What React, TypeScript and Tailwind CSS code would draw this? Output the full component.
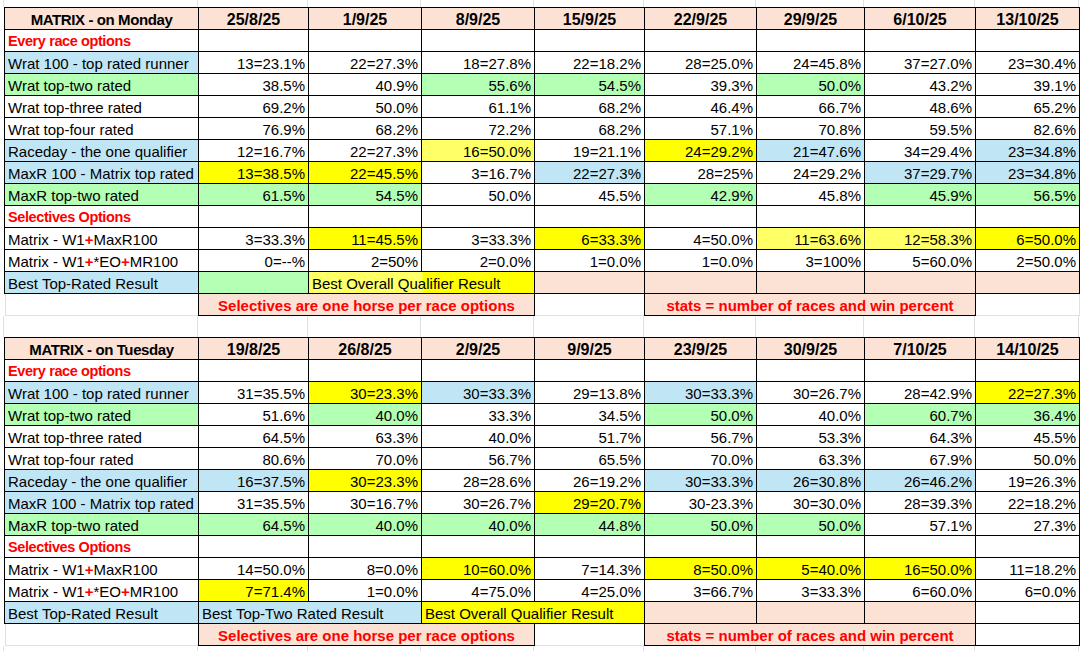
import React from "react";

const W = [194, 110, 113, 113, 110, 112, 108, 111, 104];

const BG: Record<string, string> = {
  w: "bg-white",
  b: "bg-[#c0e6f5]",
  g: "bg-[#b3ffb3]",
  y: "bg-[#ffff00]",
  l: "bg-[#ffff66]",
  p: "bg-[#fbe2d5]",
};

type Row = { label: string; lbg?: string; red?: boolean; vals?: string[]; c?: string };

const monday: Row[] = [
  { label: "Every race options", red: true },
  { label: "Wrat 100 - top rated runner", lbg: "b", vals: ["13=23.1%", "22=27.3%", "18=27.8%", "22=18.2%", "28=25.0%", "24=45.8%", "37=27.0%", "23=30.4%"] },
  { label: "Wrat top-two rated", lbg: "g", vals: ["38.5%", "40.9%", "55.6%", "54.5%", "39.3%", "50.0%", "43.2%", "39.1%"], c: "wwggwgww" },
  { label: "Wrat top-three rated", vals: ["69.2%", "50.0%", "61.1%", "68.2%", "46.4%", "66.7%", "48.6%", "65.2%"] },
  { label: "Wrat top-four rated", vals: ["76.9%", "68.2%", "72.2%", "68.2%", "57.1%", "70.8%", "59.5%", "82.6%"] },
  { label: "Raceday - the one qualifier", lbg: "b", vals: ["12=16.7%", "22=27.3%", "16=50.0%", "19=21.1%", "24=29.2%", "21=47.6%", "34=29.4%", "23=34.8%"], c: "wwlwybwb" },
  { label: "MaxR 100 - Matrix top rated", lbg: "b", vals: ["13=38.5%", "22=45.5%", "3=16.7%", "22=27.3%", "28=25%", "24=29.2%", "37=29.7%", "23=34.8%"], c: "yywbwwbb" },
  { label: "MaxR top-two rated", lbg: "g", vals: ["61.5%", "54.5%", "50.0%", "45.5%", "42.9%", "45.8%", "45.9%", "56.5%"], c: "ggwwgwgg" },
  { label: "Selectives Options", red: true },
  { label: "Matrix - W1+MaxR100", vals: ["3=33.3%", "11=45.5%", "3=33.3%", "6=33.3%", "4=50.0%", "11=63.6%", "12=58.3%", "6=50.0%"], c: "wywywlly" },
  { label: "Matrix - W1+*EO+MR100", vals: ["0=--%", "2=50%", "2=0.0%", "1=0.0%", "1=0.0%", "3=100%", "5=60.0%", "2=50.0%"] },
];

const tuesday: Row[] = [
  { label: "Every race options", red: true },
  { label: "Wrat 100 - top rated runner", lbg: "b", vals: ["31=35.5%", "30=23.3%", "30=33.3%", "29=13.8%", "30=33.3%", "30=26.7%", "28=42.9%", "22=27.3%"], c: "wybwbwwy" },
  { label: "Wrat top-two rated", lbg: "g", vals: ["51.6%", "40.0%", "33.3%", "34.5%", "50.0%", "40.0%", "60.7%", "36.4%"], c: "wgwwgwgg" },
  { label: "Wrat top-three rated", vals: ["64.5%", "63.3%", "40.0%", "51.7%", "56.7%", "53.3%", "64.3%", "45.5%"] },
  { label: "Wrat top-four rated", vals: ["80.6%", "70.0%", "56.7%", "65.5%", "70.0%", "63.3%", "67.9%", "50.0%"] },
  { label: "Raceday - the one qualifier", lbg: "b", vals: ["16=37.5%", "30=23.3%", "28=28.6%", "26=19.2%", "30=33.3%", "26=30.8%", "26=46.2%", "19=26.3%"], c: "bywwbbbw" },
  { label: "MaxR 100 - Matrix top rated", lbg: "b", vals: ["31=35.5%", "30=16.7%", "30=26.7%", "29=20.7%", "30-23.3%", "30=30.0%", "28=39.3%", "22=18.2%"], c: "wwwywwww" },
  { label: "MaxR top-two rated", lbg: "g", vals: ["64.5%", "40.0%", "40.0%", "44.8%", "50.0%", "50.0%", "57.1%", "27.3%"], c: "ggggggww" },
  { label: "Selectives Options", red: true },
  { label: "Matrix - W1+MaxR100", vals: ["14=50.0%", "8=0.0%", "10=60.0%", "7=14.3%", "8=50.0%", "5=40.0%", "16=50.0%", "11=18.2%"], c: "wwywyyyw" },
  { label: "Matrix - W1+*EO+MR100", vals: ["7=71.4%", "1=0.0%", "4=75.0%", "4=25.0%", "3=66.7%", "3=33.3%", "6=60.0%", "6=0.0%"], c: "ywwwwwww" },
];

const cell = "border border-black h-[22px] align-bottom pb-[1px] leading-[17px] whitespace-nowrap overflow-visible";

function Label({ text }: { text: string }) {
  // red bold plus signs as in the sheet
  const parts = text.split("+");
  return (
    <>
      {parts.map((p, i) => (
        <React.Fragment key={i}>
          {i > 0 && <span className="font-bold text-[#ff0000]">+</span>}
          {p}
        </React.Fragment>
      ))}
    </>
  );
}

function GridStrip({ h }: { h: string }) {
  return (
    <div className={`flex ${h}`}>
      <div className="w-[4px] shrink-0 border-r border-[#e1e1e1]" />
      {W.map((w, i) => (
        <div key={i} style={{ width: w }} className="shrink-0 border-r border-[#e1e1e1]" />
      ))}
    </div>
  );
}

function Sheet({ title, dates, rows, tuesday: tue }: { title: string; dates: string[]; rows: Row[]; tuesday?: boolean }) {
  return (
    <table className="ml-[4px] table-fixed border-collapse w-[1075px] text-[15px] text-black">
      <colgroup>
        {W.map((w, i) => (
          <col key={i} style={{ width: w }} />
        ))}
      </colgroup>
      <tbody>
        <tr>
          <td className={`${cell} bg-[#fbe2d5] text-center font-bold text-[15px] tracking-[-0.4px]`}>{title}</td>
          {dates.map((d) => (
            <td key={d} className={`${cell} bg-[#fbe2d5] text-center font-bold text-[16px]`}>
              {d}
            </td>
          ))}
        </tr>
        {rows.map((r) => (
          <tr key={r.label}>
            <td
              className={`${cell} px-[3px] ${BG[r.lbg || "w"]} ${
                r.red ? "font-bold text-[#ff0000] text-[14.5px] tracking-[-0.4px]" : ""
              }`}
            >
              {r.red ? r.label : <Label text={r.label} />}
            </td>
            {Array.from({ length: 8 }).map((_, i) => (
              <td key={i} className={`${cell} pr-[3px] text-right ${BG[(r.c || "wwwwwwww")[i]]}`}>
                {r.vals ? r.vals[i] : ""}
              </td>
            ))}
          </tr>
        ))}
        {tue ? (
          <tr>
            <td className={`${cell} px-[3px] bg-[#c0e6f5]`}>Best Top-Rated Result</td>
            <td colSpan={2} className={`${cell} px-[3px] bg-[#c0e6f5]`}>
              Best Top-Two Rated Result
            </td>
            <td colSpan={2} className={`${cell} px-[3px] bg-[#ffff00]`}>
              Best Overall Qualifier Result
            </td>
            <td className={`${cell} bg-[#fbe2d5]`} />
            <td className={`${cell} bg-[#fbe2d5]`} />
            <td className={`${cell} bg-[#fbe2d5]`} />
            <td className={`${cell} bg-white`} />
          </tr>
        ) : (
          <tr>
            <td className={`${cell} px-[3px] bg-[#c0e6f5]`}>Best Top-Rated Result</td>
            <td className={`${cell} bg-[#b3ffb3]`} />
            <td
              colSpan={2}
              className={`${cell} px-[3px] bg-[linear-gradient(to_right,#ffff66_113px,#ffff00_113px)]`}
            >
              Best Overall Qualifier Result
            </td>
            <td className={`${cell} bg-[#fbe2d5]`} />
            <td className={`${cell} bg-[#fbe2d5]`} />
            <td className={`${cell} bg-[#fbe2d5]`} />
            <td className={`${cell} bg-[#fbe2d5]`} />
            <td className={`${cell} bg-[#fbe2d5]`} />
          </tr>
        )}
        <tr>
          <td className="h-[22px] border-0 shadow-[inset_1px_-1px_0_#e1e1e1]" />
          <td colSpan={3} className={`${cell} bg-[#fbe2d5] text-center font-bold text-[#ff0000]`}>
            Selectives are one horse per race options
          </td>
          <td className="h-[22px] border-0 shadow-[inset_0_-1px_0_#e1e1e1]" />
          <td colSpan={3} className={`${cell} bg-[#fbe2d5] text-center font-bold text-[#ff0000]`}>
            stats = number of races and win percent
          </td>
          {tue ? (
            <td className={`${cell} bg-white`} />
          ) : (
            <td className="h-[22px] border-0 shadow-[inset_-1px_-1px_0_#e1e1e1]" />
          )}
        </tr>
      </tbody>
    </table>
  );
}

export default function App() {
  return (
    <div className="w-[1084px] h-[651px] overflow-hidden bg-white font-['Liberation_Sans',Arial,sans-serif]">
      <GridStrip h="h-[7px]" />
      <Sheet
        title="MATRIX - on Monday"
        dates={["25/8/25", "1/9/25", "8/9/25", "15/9/25", "22/9/25", "29/9/25", "6/10/25", "13/10/25"]}
        rows={monday}
      />
      <GridStrip h="h-[21px]" />
      <Sheet
        title="MATRIX - on Tuesday"
        dates={["19/8/25", "26/8/25", "2/9/25", "9/9/25", "23/9/25", "30/9/25", "7/10/25", "14/10/25"]}
        rows={tuesday}
        tuesday
      />
      <GridStrip h="h-[10px]" />
    </div>
  );
}
